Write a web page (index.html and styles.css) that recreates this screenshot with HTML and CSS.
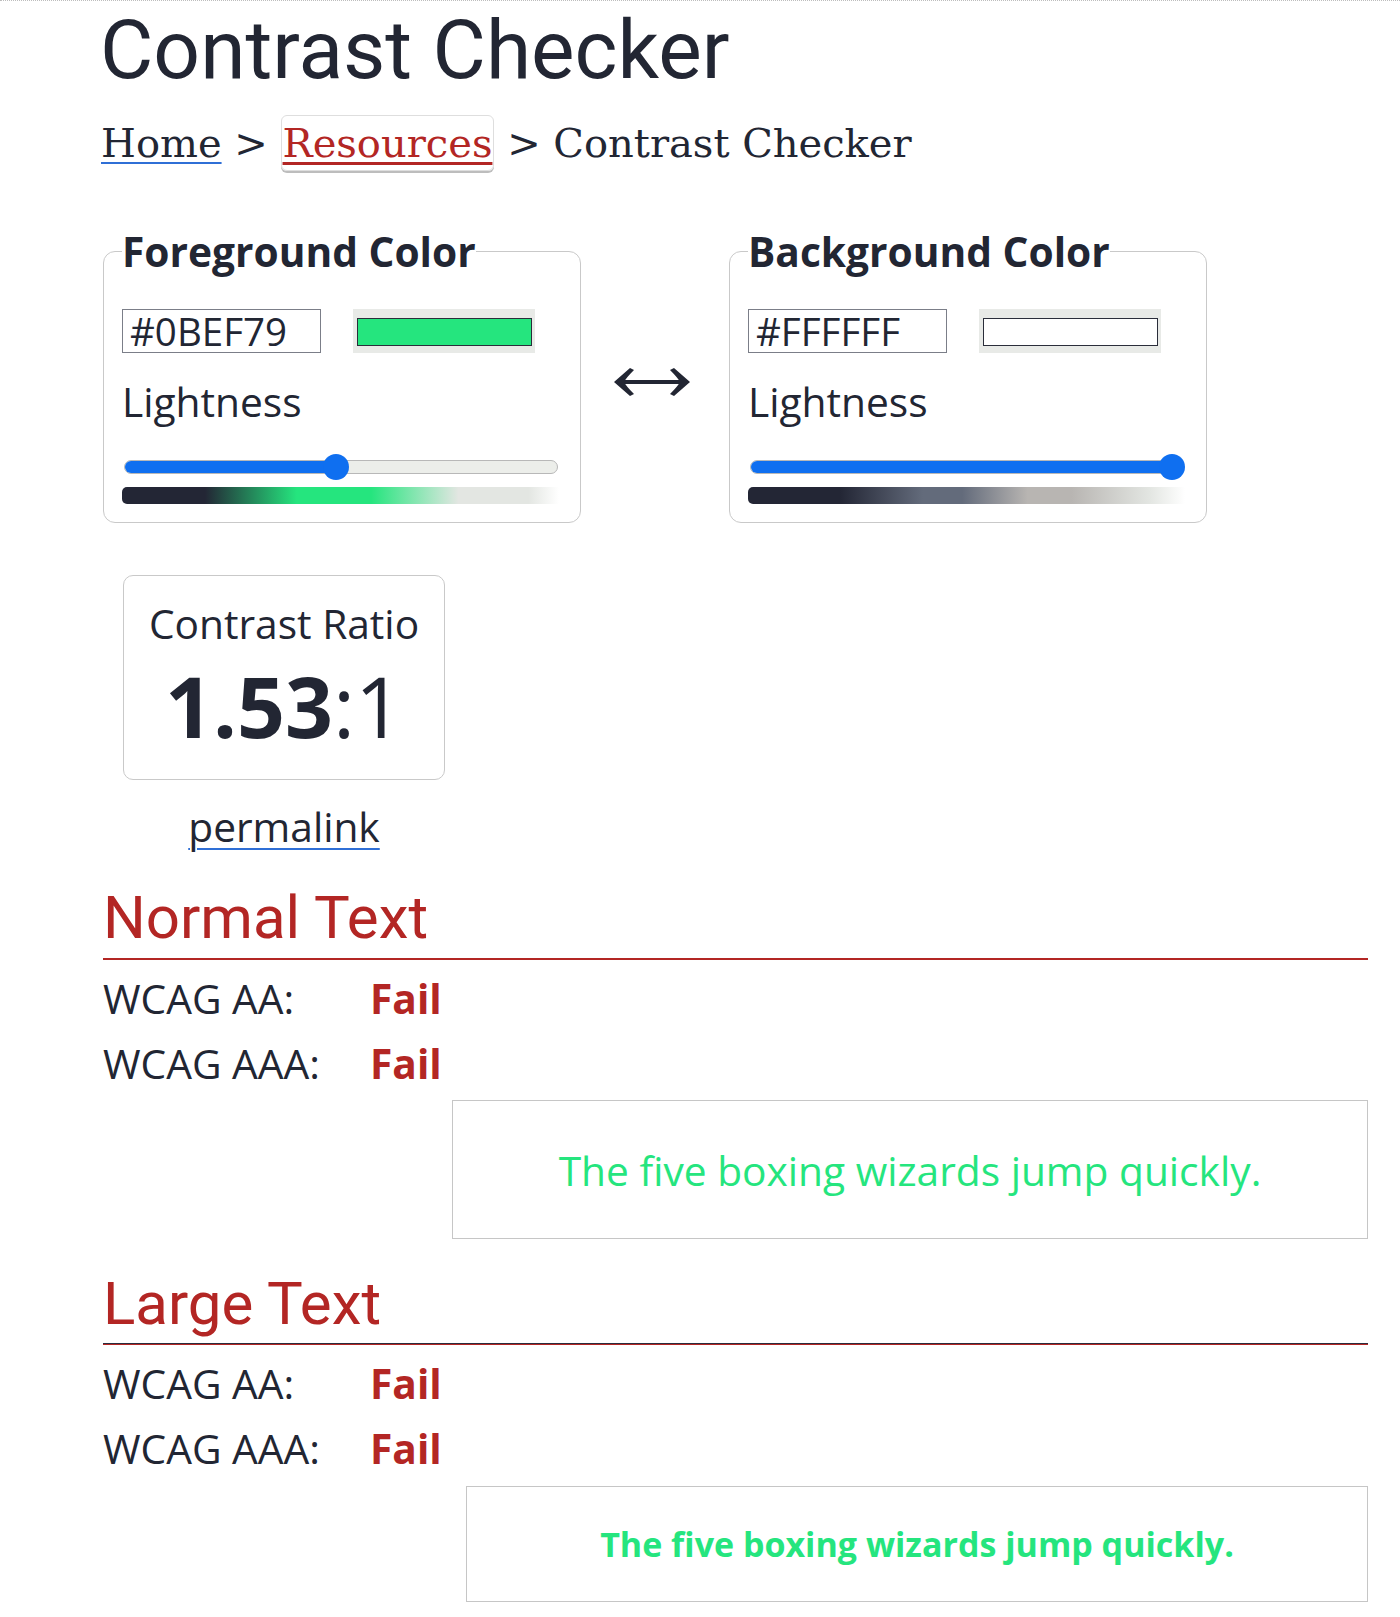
FILE: index.html
```html
<!DOCTYPE html>
<html lang="en">
<head>
<meta charset="utf-8">
<title>Contrast Checker</title>
<link rel="stylesheet" href="styles.css">
</head>
<body>
<main class="page">
  <h1 class="title">Contrast Checker</h1>
  <nav class="crumbs"><a class="crumb-home" href="#">Home</a> &gt; <a class="crumb-res" href="#">Resources</a> &gt; Contrast Checker</nav>

  <div class="pickers">
    <fieldset class="picker">
      <legend>Foreground Color</legend>
      <div class="color-row">
        <input class="hex" type="text" value="#0BEF79">
        <div class="swatch"><div class="swatch-fill swatch-fg"></div></div>
      </div>
      <div class="label">Lightness</div>
      <div class="slider">
        <div class="track"><div class="fill" style="width: calc((100% - 26px) * 0.49 + 13px)"></div></div>
        <div class="thumb" style="left: calc((100% - 26px) * 0.49)"></div>
      </div>
      <div class="grad grad-fg"></div>
    </fieldset>

    <div class="swap">
      <svg width="76" height="30" viewBox="0 0 76 30" aria-hidden="true">
        <rect x="6" y="13" width="64" height="4" fill="#222633"/>
        <path d="M0 15 L16 1 L20 3 Q12 11 10 15 Q12 19 20 27 L16 29 Z" fill="#222633"/>
        <path d="M76 15 L60 1 L56 3 Q64 11 66 15 Q64 19 56 27 L60 29 Z" fill="#222633"/>
      </svg>
    </div>

    <fieldset class="picker">
      <legend>Background Color</legend>
      <div class="color-row">
        <input class="hex" type="text" value="#FFFFFF">
        <div class="swatch"><div class="swatch-fill swatch-bg"></div></div>
      </div>
      <div class="label">Lightness</div>
      <div class="slider">
        <div class="track"><div class="fill" style="width: calc((100% - 26px) * 1 + 13px)"></div></div>
        <div class="thumb" style="left: calc((100% - 26px) * 1)"></div>
      </div>
      <div class="grad grad-bg"></div>
    </fieldset>
  </div>

  <div class="ratio-wrap">
    <div class="ratio-box">
      <div class="ratio-label">Contrast Ratio</div>
      <div class="ratio-value"><b>1.53</b>:1</div>
    </div>
    <div class="permalink-line"><a class="permalink" href="#">permalink</a></div>
  </div>

  <section class="result result-normal">
    <h2 class="result-title">Normal Text</h2>
    <div class="checks">
      <div>WCAG AA:</div><div class="fail">Fail</div>
      <div>WCAG AAA:</div><div class="fail">Fail</div>
    </div>
    <div class="sample">The five boxing wizards jump quickly.</div>
  </section>

  <section class="result result-large">
    <h2 class="result-title">Large Text</h2>
    <div class="checks">
      <div>WCAG AA:</div><div class="fail">Fail</div>
      <div>WCAG AAA:</div><div class="fail">Fail</div>
    </div>
    <div class="sample">The five boxing wizards jump quickly.</div>
  </section>
</main>
</body>
</html>
```

FILE: styles.css
```css
html {
  border-top: 1px dotted #bdbdbd;
}

body {
  margin: 0;
  background: #ffffff;
  color: #222633;
  font-family: "Open Sans", sans-serif;
}

.page {
  padding-left: 103px;
  width: 1265px;
}

.title {
  margin: 8px 0 0 -3px;
  font: 400 82px/1 Roboto, sans-serif;
  color: #222633;
}

.crumbs {
  margin: 32px 0 0 -2px;
  font: 400 40px/1 "DejaVu Serif", serif;
  color: #222633;
  white-space: nowrap;
}

.crumb-home {
  color: #222633;
  text-decoration: underline;
  text-decoration-color: #2f6fd6;
  text-decoration-thickness: 2px;
  text-underline-offset: 5px;
}

.crumb-res {
  color: #b32624;
  text-decoration: underline;
  text-decoration-color: #b32624;
  text-decoration-thickness: 3px;
  text-underline-offset: 5px;
  border: 1px solid #dedede;
  border-radius: 6px;
  box-shadow: 0 2px 0 #bdbdbd;
  padding: 4px 1px;
}

.pickers {
  display: flex;
  align-items: flex-start;
  margin-top: 68px;
}

.picker {
  width: 478px;
  box-sizing: border-box;
  min-width: 0;
  margin: 0;
  padding: 37px 21px 18px 18px;
  border: 1px solid #c9c9c9;
  border-radius: 12px;
}

.picker legend {
  padding: 0;
  font: 700 40.7px/1 "Open Sans", sans-serif;
  color: #222633;
}

.color-row {
  display: flex;
  gap: 32px;
  height: 44px;
}

.hex {
  width: 199px;
  height: 44px;
  box-sizing: border-box;
  margin: 0;
  padding: 0 7px;
  border: 1px solid #7b7e88;
  border-radius: 0;
  font: 400 38.5px "Open Sans", sans-serif;
  color: #222633;
  background: #fff;
}

.swatch {
  width: 182px;
  height: 44px;
  box-sizing: border-box;
  padding: 9px 3px 7px 4px;
  background: #e8eae7;
}

.swatch-fill {
  height: 100%;
  box-sizing: border-box;
  border: 1px solid #2a2d3a;
}

.swatch-fg {
  background: #25e57e;
}

.swatch-bg {
  background: #ffffff;
}

.label {
  margin-top: 28px;
  font: 400 40.7px/1 "Open Sans", sans-serif;
}

.slider {
  position: relative;
  height: 26px;
  margin-top: 33px;
  padding-top: 6px;
  box-sizing: border-box;
}

.track {
  height: 14px;
  margin: 0 1px 0 2px;
  box-sizing: border-box;
  border: 1px solid #b8b8b8;
  border-radius: 7px;
  background: #eceeea;
  overflow: hidden;
}

.fill {
  height: 100%;
  background: #0f6ff0;
}

.thumb {
  position: absolute;
  top: 0;
  width: 26px;
  height: 26px;
  border-radius: 50%;
  background: #0f6ff0;
}

.grad {
  height: 17px;
  margin-top: 7px;
  border-radius: 5px 0 0 5px;
}

.grad-fg {
  background: linear-gradient(to right,
    #232635 0%, #232635 19%,
    #25e57e 40%, #25e57e 57%,
    #e3e6e2 77%, #e3e6e2 93%,
    #ffffff 100%);
}

.grad-bg {
  background: linear-gradient(to right,
    #232635 0%, #232635 21%,
    #636b7b 40%, #636b7b 49%,
    #b8b5b2 64%, #b8b5b2 74%,
    #e3e6e2 92%, #ffffff 100%);
}

.swap {
  width: 148px;
  box-sizing: border-box;
  padding-right: 7px;
  display: flex;
  justify-content: center;
  align-self: center;
  margin-top: 10px;
}

.swap svg {
  display: block;
}

.ratio-wrap {
  width: 322px;
  margin: 52px 0 0 20px;
  text-align: center;
}

.ratio-box {
  box-sizing: border-box;
  height: 205px;
  padding-top: 27px;
  border: 1px solid #c9c9c9;
  border-radius: 10px;
}

.ratio-label {
  font: 400 40.7px/40px "Open Sans", sans-serif;
}

.ratio-value {
  margin-top: 21px;
  font: 400 84px/84px "Open Sans", sans-serif;
}

.ratio-value b {
  font-weight: 700;
}

.permalink-line {
  margin-top: 26px;
  font: 400 40.7px/40px "Open Sans", sans-serif;
}

.permalink {
  color: #222633;
  text-decoration: underline;
  text-decoration-color: #2f6fd6;
  text-decoration-thickness: 2px;
  text-underline-offset: 6px;
}

.result-title {
  margin: 0;
  padding-bottom: 10px;
  font: 400 60px/1 Roboto, sans-serif;
  color: #b32624;
  border-bottom: 2px solid #b32624;
}

.result-normal .result-title {
  margin-top: 42px;
}

.result-large .result-title {
  margin-top: 35px;
  border-bottom-width: 1px;
  box-shadow: inset 0 -1px 0 #2b2d3d;
}

.checks {
  display: grid;
  grid-template-columns: 267px auto;
  margin-top: 6px;
  font: 400 40.7px/65px "Open Sans", sans-serif;
}

.fail {
  color: #b32624;
  font-weight: 700;
}

.sample {
  display: flex;
  align-items: center;
  justify-content: center;
  box-sizing: border-box;
  border: 1px solid #c6c6c6;
  color: #25e57e;
}

.result-normal .sample {
  margin: 4px 0 0 349px;
  height: 139px;
  font: 400 40.7px/1 "Open Sans", sans-serif;
}

.result-large .sample {
  margin: 5px 0 0 363px;
  height: 116px;
  font: 700 34px/1 "Open Sans", sans-serif;
}
```
